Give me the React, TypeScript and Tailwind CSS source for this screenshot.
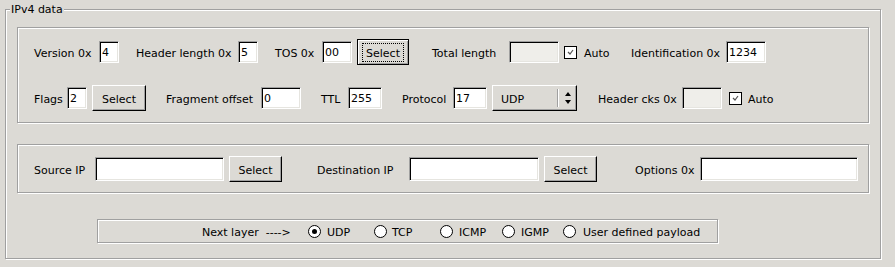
import type { ReactNode } from "react";

const Label = ({ w, ml, children }: { w: number; ml: number; children: ReactNode }) => (
  <span className="whitespace-nowrap pt-[2px] leading-none" style={{ width: w, marginLeft: ml }}>
    {children}
  </span>
);

const Entry = ({
  w,
  ml,
  h = 22,
  value = "",
  disabled = false,
}: {
  w: number;
  ml: number;
  h?: number;
  value?: string;
  disabled?: boolean;
}) => (
  <div
    className={`flex items-center border border-t-[#a0a0a0] border-l-[#a0a0a0] border-b-white border-r-white pl-[2px] pt-[2px] shadow-[inset_1px_1px_0_#000,inset_-1px_-1px_0_#e6e5e0] ${
      disabled ? "bg-[#efeeea]" : "bg-white"
    }`}
    style={{ width: w, height: h, marginLeft: ml }}
  >
    {value}
  </div>
);

const Btn = ({ w, ml, focused = false, label = "Select" }: { w: number; ml: number; focused?: boolean; label?: string }) => (
  <div
    className={`flex h-[26px] items-center justify-center ${
      focused
        ? "border border-black shadow-[inset_1px_1px_0_#fff,inset_-1px_-1px_0_#a0a0a0]"
        : "border border-t-white border-l-white border-b-black border-r-black shadow-[inset_-1px_-1px_0_#a0a0a0]"
    }`}
    style={{ width: w, marginLeft: ml }}
  >
    <span
      className={
        focused
          ? "border border-dotted border-black px-[3px] pt-[4px] pb-[2px] leading-none"
          : "pt-[2px] leading-none"
      }
    >
      {label}
    </span>
  </div>
);

const Check = ({ ml }: { ml: number }) => (
  <div
    className="flex h-[13px] w-[13px] items-center justify-center border border-black bg-white"
    style={{ marginLeft: ml }}
  >
    <svg width="9" height="9" viewBox="0 0 9 9">
      <polyline points="2,4 4,6 7,2" fill="none" stroke="#555" strokeWidth="1.2" />
    </svg>
  </div>
);

const Radio = ({ ml, on = false }: { ml: number; on?: boolean }) => (
  <div
    className="flex h-[13px] w-[13px] items-center justify-center rounded-full border border-black bg-white"
    style={{ marginLeft: ml }}
  >
    {on && <div className="h-[5px] w-[5px] rounded-full bg-black" />}
  </div>
);

const Groove = "border border-[#a0a0a0] shadow-[inset_1px_1px_0_#fff,1px_1px_0_#fff]";

export default function App() {
  return (
    <div
      className="h-[267px] w-[895px] overflow-hidden bg-[#dcdad5] pt-[9px] pl-[5px] text-[11px] text-black"
      style={{ fontFamily: '"DejaVu Sans", Verdana, sans-serif' }}
    >
      <div className={`relative h-[250px] w-[876px] ${Groove}`}>
        <span className="absolute left-[4px] top-[-6px] bg-[#dcdad5] px-[1px] leading-none">IPv4 data</span>

        <div className={`ml-[11px] mt-[17px] h-[96px] w-[852px] ${Groove}`}>
          <div className="mt-[11px] flex h-[26px] items-center">
            <Label w={61} ml={16}>Version 0x</Label>
            <Entry w={20} ml={4} value="4" />
            <Label w={97} ml={17}>Header length 0x</Label>
            <Entry w={20} ml={5} value="5" />
            <Label w={43} ml={17}>TOS 0x</Label>
            <Entry w={30} ml={4} value="00" />
            <Btn w={52} ml={5} focused />
            <Label w={68} ml={23}>Total length</Label>
            <Entry w={50} ml={9} disabled />
            <Check ml={5} />
            <Label w={26} ml={7}>Auto</Label>
            <Label w={91} ml={21}>Identification 0x</Label>
            <Entry w={40} ml={4} value="1234" />
          </div>
          <div className="mt-[20px] flex h-[26px] items-center">
            <Label w={30} ml={16}>Flags</Label>
            <Entry w={20} ml={3} value="2" />
            <Btn w={54} ml={5} />
            <Label w={91} ml={20}>Fragment offset</Label>
            <Entry w={40} ml={4} value="0" />
            <Label w={24} ml={20}>TTL</Label>
            <Entry w={34} ml={3} value="255" />
            <Label w={46} ml={20}>Protocol</Label>
            <Entry w={34} ml={5} value="17" />
            <div className="ml-[5px] flex h-[26px] w-[85px] items-center border border-t-white border-l-white border-b-black border-r-black shadow-[inset_-1px_-1px_0_#a0a0a0]">
              <span className="ml-[8px] w-[56px] pt-[2px] leading-none">UDP</span>
              <div className="h-[18px] w-[2px] border-l border-[#a0a0a0] bg-white" />
              <svg className="ml-[5px]" width="8" height="14" viewBox="0 0 8 14">
                <polygon points="4,1 7,5 1,5" fill="#000" />
                <polygon points="1,9 7,9 4,13" fill="#000" />
              </svg>
            </div>
            <Label w={80} ml={21}>Header cks 0x</Label>
            <Entry w={40} ml={4} disabled />
            <Check ml={7} />
            <Label w={26} ml={6}>Auto</Label>
          </div>
        </div>

        <div className={`ml-[11px] mt-[21px] h-[49px] w-[852px] ${Groove}`}>
          <div className="mt-[11px] flex h-[26px] items-center">
            <Label w={55} ml={16}>Source IP</Label>
            <Entry w={129} ml={6} h={24} />
            <Btn w={53} ml={5} />
            <Label w={79} ml={35}>Destination IP</Label>
            <Entry w={130} ml={13} h={24} />
            <Btn w={53} ml={5} />
            <Label w={60} ml={38}>Options 0x</Label>
            <Entry w={158} ml={5} h={24} />
          </div>
        </div>

        <div className={`ml-[91px] mt-[26px] flex h-[24px] w-[621px] items-center ${Groove}`}>
          <Label w={93} ml={104}>Next layer&nbsp;&nbsp;----&gt;</Label>
          <Radio ml={13} on />
          <Label w={23} ml={6}>UDP</Label>
          <Radio ml={24} />
          <Label w={24} ml={5}>TCP</Label>
          <Radio ml={24} />
          <Label w={29} ml={6}>ICMP</Label>
          <Radio ml={14} />
          <Label w={29} ml={6}>IGMP</Label>
          <Radio ml={13} />
          <Label w={120} ml={7}>User defined payload</Label>
        </div>
      </div>
    </div>
  );
}
